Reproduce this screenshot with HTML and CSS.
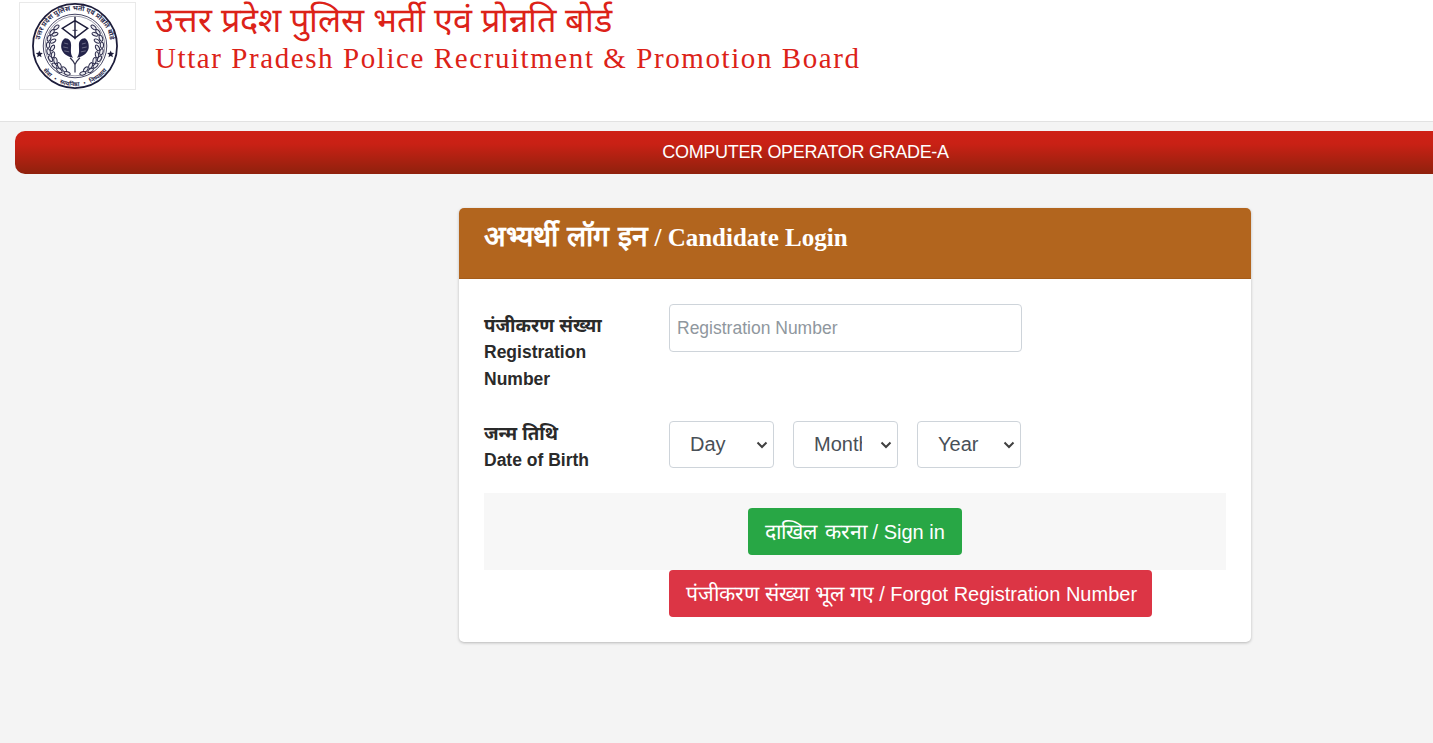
FILE: index.html
```html
<!DOCTYPE html>
<html lang="hi">
<head>
<meta charset="utf-8">
<title>Candidate Login</title>
<link rel="stylesheet" href="styles.css">
</head>
<body>
<header class="site-header">
  <div class="logo-box">
    <svg class="seal" viewBox="0 0 90 90" aria-label="Uttar Pradesh Police seal">
      <defs>
        <path id="ringTop" d="M8.500 45a36.500 36.500 0 0 1 73 0"/>
        <path id="ringBottom" d="M4 45a41 41 0 0 0 82 0"/>
        <ellipse id="leaf" rx="3.2" ry="1.7" fill="#eeeef2" stroke="#2c2c4c" stroke-width="1.05"/>
      </defs>
      <circle cx="45" cy="45" r="43" fill="#fff" stroke="#1c1c3a" stroke-width="1.8"/>
      <circle cx="45" cy="45" r="32.500" fill="none" stroke="#2b2b4d" stroke-width=".9"/>
      <circle cx="45" cy="45" r="30.500" fill="none" stroke="#55556f" stroke-width=".6"/>
      <text class="seal-text"><textPath href="#ringTop" startOffset="50%" text-anchor="middle">उत्तर प्रदेश पुलिस भर्ती एवं प्रोन्नति बोर्ड</textPath></text>
      <text class="seal-text seal-text-low"><textPath href="#ringBottom" startOffset="50%" text-anchor="middle">सेवा • सत्यनिष्ठा • निष्पक्षता</textPath></text>
      <path d="M8.500 49.500l1 2.500 2.600.2-2 1.700.7 2.600-2.300-1.400-2.300 1.400.7-2.600-2-1.700 2.600-.2zM81.500 49.500l1 2.500 2.600.2-2 1.700.7 2.600-2.300-1.400-2.300 1.400.7-2.600-2-1.700 2.600-.2z" fill="#1c1c3a"/>
      <path d="M45 15v23M32 27l13-8 13 8-13 10z" fill="none" stroke="#1c1c3a" stroke-width="1.500"/>
      <path d="M42.500 29h5" stroke="#1c1c3a" stroke-width=".8"/>
      <g>
        <use href="#leaf" transform="translate(26 26) rotate(-40)"/>
        <use href="#leaf" transform="translate(21.500 31) rotate(-55)"/>
        <use href="#leaf" transform="translate(24.500 33) rotate(-20)"/>
        <use href="#leaf" transform="translate(18.500 37) rotate(-70)"/>
        <use href="#leaf" transform="translate(22.500 40) rotate(-30)"/>
        <use href="#leaf" transform="translate(17.500 44) rotate(-88)"/>
        <use href="#leaf" transform="translate(22 47) rotate(-60)"/>
        <use href="#leaf" transform="translate(18 51) rotate(75)"/>
        <use href="#leaf" transform="translate(22.500 54) rotate(-80)"/>
        <use href="#leaf" transform="translate(20 58) rotate(60)"/>
        <use href="#leaf" transform="translate(25 60) rotate(80)"/>
        <use href="#leaf" transform="translate(24 65) rotate(45)"/>
        <use href="#leaf" transform="translate(29 65) rotate(65)"/>
        <use href="#leaf" transform="translate(29 70) rotate(35)"/>
        <use href="#leaf" transform="translate(34 69) rotate(50)"/>
        <use href="#leaf" transform="translate(37 73) rotate(15)"/>
      </g>
      <g>
        <use href="#leaf" transform="translate(64 26) rotate(40)"/>
        <use href="#leaf" transform="translate(68.500 31) rotate(55)"/>
        <use href="#leaf" transform="translate(65.500 33) rotate(20)"/>
        <use href="#leaf" transform="translate(71.500 37) rotate(70)"/>
        <use href="#leaf" transform="translate(67.500 40) rotate(30)"/>
        <use href="#leaf" transform="translate(72.500 44) rotate(88)"/>
        <use href="#leaf" transform="translate(68 47) rotate(60)"/>
        <use href="#leaf" transform="translate(72 51) rotate(-75)"/>
        <use href="#leaf" transform="translate(67.500 54) rotate(80)"/>
        <use href="#leaf" transform="translate(70 58) rotate(-60)"/>
        <use href="#leaf" transform="translate(65 60) rotate(-80)"/>
        <use href="#leaf" transform="translate(66 65) rotate(-45)"/>
        <use href="#leaf" transform="translate(61 65) rotate(-65)"/>
        <use href="#leaf" transform="translate(61 70) rotate(-35)"/>
        <use href="#leaf" transform="translate(56 69) rotate(-50)"/>
        <use href="#leaf" transform="translate(53 73) rotate(-15)"/>
      </g>
      <path d="M35 37c4 0 6 3 6 7 0 5-1 9 2 13-5-1-11-4-12-10-.5-4 1-9 4-10zM55 37c-4 0-6 3-6 7 0 5 1 9-2 13 5-1 11-4 12-10 .5-4-1-9-4-10z" fill="#23234a"/>
      <path d="M34 42l4 1M33 46l5 1M34 50l5 1M56 42l-4 1M57 46l-5 1M56 50l-5 1" stroke="#8a8aa0" stroke-width=".7"/>
      <path d="M40 57c2 2 4 4 5 7 1-3 3-5 5-7M45 64v8" fill="none" stroke="#34344f" stroke-width="1.300"/>
    </svg>
  </div>
  <div class="titles">
    <div class="title-hi">उत्तर प्रदेश पुलिस भर्ती एवं प्रोन्नति बोर्ड</div>
    <div class="title-en">Uttar Pradesh Police Recruitment &amp; Promotion Board</div>
  </div>
</header>
<div class="banner">COMPUTER OPERATOR GRADE-A</div>
<main class="login-wrap">
  <section class="card">
    <h1 class="card-head"><span class="head-hi">अभ्यर्थी लॉग इन</span> / Candidate Login</h1>
    <form class="card-body">
      <div class="row row-reg">
        <label class="field-label" for="reg"><span class="label-hi">पंजीकरण संख्या</span><br>Registration Number</label>
        <input class="text-input" id="reg" type="text" placeholder="Registration Number">
      </div>
      <div class="row row-dob">
        <label class="field-label" for="day"><span class="label-hi">जन्म तिथि</span><br>Date of Birth</label>
        <div class="selects">
          <select class="select" id="day"><option>Day</option></select>
          <select class="select" aria-label="Month"><option>Month</option></select>
          <select class="select select-last" aria-label="Year"><option>Year</option></select>
        </div>
      </div>
      <div class="actions"><button class="btn btn-green" type="button"><span class="btn-hi">दाखिल करना</span> / Sign in</button></div>
      <div class="forgot"><button class="btn btn-red" type="button"><span class="btn-hi">पंजीकरण संख्या भूल गए</span> / Forgot Registration Number</button></div>
    </form>
  </section>
</main>
</body>
</html>
```
FILE: styles.css
```css
* { box-sizing: border-box; }
html, body { margin: 0; height: 743px; overflow: hidden; }
body {
  background: #f4f4f4;
  font-family: "Liberation Sans", "Noto Sans", sans-serif;
  color: #212529;
}
.site-header {
  height: 122px;
  background: #fff;
  border-bottom: 1px solid #e2e2e2;
  display: flex;
  align-items: flex-start;
  padding: 2px 0 0 19px;
}
.logo-box {
  width: 117px;
  height: 88px;
  border: 1px solid #e9e9e9;
  display: flex;
  align-items: center;
  padding-left: 11px;
  flex: none;
}
.seal { display: block; width: 88px; height: 88px; }
.seal-text { font: 700 7px "Liberation Sans", "Noto Sans", sans-serif; fill: #2b2b4d; }
.seal-text-low { font-size: 6px; word-spacing: 3px; }
.titles { margin: -2px 0 0 19px; color: #dc2218; font-family: "Liberation Serif", serif; }
.title-hi { font-size: 34.2px; line-height: 42px; word-spacing: .4px; }
.title-en { font-size: 29px; line-height: 32px; letter-spacing: 1.58px; }
.banner {
  width: 1580px;
  height: 43px;
  margin: 9px 0 0 15px;
  padding-left: 1px;
  border-radius: 10px;
  background: linear-gradient(#ce2116, #c92115 30%, #8f210d);
  color: #fff;
  font-size: 18px;
  letter-spacing: -.32px;
  line-height: 43px;
  text-align: center;
}
.login-wrap { padding: 34px 0 0 459px; }
.card {
  width: 792px;
  height: 434px;
  background: #fff;
  border-radius: 5px;
  box-shadow: 0 1px 3px rgba(0,0,0,.25);
  overflow: hidden;
}
.card-head {
  height: 71px;
  margin: 0;
  padding: 11px 25px 0;
  background: #b2651e;
  border-bottom: 1px solid #a55c1a;
  color: #fff;
  font-family: "Liberation Serif", serif;
  font-weight: 700;
  font-size: 25px;
  line-height: 36px;
}
.head-hi { font-size: 28.4px; word-spacing: 2px; }
.card-body { padding: 25px 25px 0; }
.row { display: flex; align-items: flex-start; }
.row-reg { height: 117px; }
.row-dob { height: 72px; }
.field-label {
  width: 185px;
  flex: none;
  padding: 8px 60px 0 0;
  font-size: 17.5px;
  font-weight: 700;
  line-height: 27px;
  color: #2a2a2a;
}
.label-hi { font-size: 18.6px; line-height: 1; vertical-align: -1px; }
.row-dob .field-label { margin-top: -1px; padding-top: 0; padding-right: 0; }
.text-input {
  width: 353px;
  height: 48px;
  padding: 0 7px;
  border: 1px solid #ced4da;
  border-radius: 4px;
  background: #fff;
  font: 17.5px "Liberation Sans", sans-serif;
  color: #495057;
}
.text-input::placeholder { color: #8f979e; opacity: 1; }
.selects { display: flex; gap: 19px; }
.select {
  appearance: none;
  width: 105px;
  height: 47px;
  padding: 0 35px 0 20px;
  border: 1px solid #ced4da;
  border-radius: 4px;
  background: #fff url("data:image/svg+xml,%3Csvg xmlns='http://www.w3.org/2000/svg' width='12' height='8' viewBox='0 0 12 8'%3E%3Cpath d='M1.500 1.500 6 6l4.500-4.500' fill='none' stroke='%23404040' stroke-width='2'/%3E%3C/svg%3E") no-repeat right 5px center;
  font: 20px/45px "Liberation Sans", sans-serif;
  color: #495057;
}
.select-last { width: 104px; }
.actions {
  height: 77px;
  background: #f7f7f7;
  display: flex;
  justify-content: center;
  padding: 15px 0 0 0;
}
.forgot { padding-left: 185px; }
.btn {
  height: 47px;
  border: 0;
  border-radius: 4px;
  color: #fff;
  font: 20px "Liberation Sans", sans-serif;
  padding: 0 10px 2px;
}
.btn-hi { font-size: 21.2px; }
.btn-green { background: #28a745; width: 214px; }
.btn-green .btn-hi { word-spacing: 2px; }
.btn-red { background: #dc3545; width: 483px; padding-left: 12px; }
```
